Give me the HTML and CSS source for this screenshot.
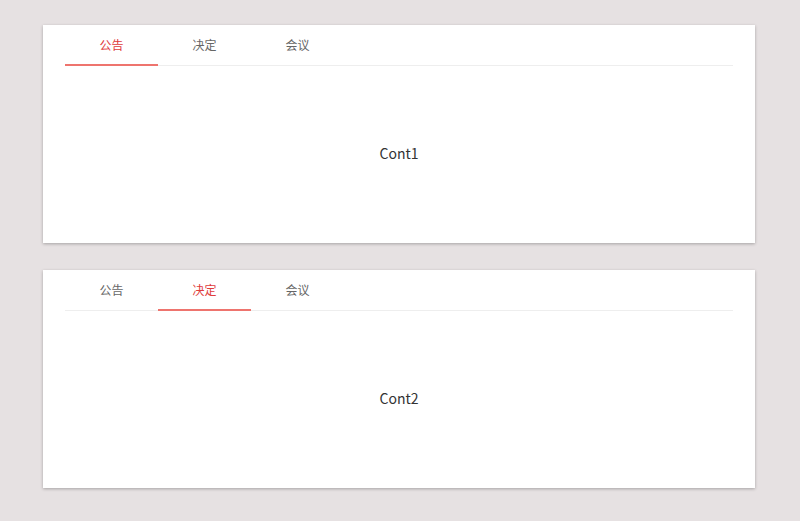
FILE: index.html
```html
<!DOCTYPE html>
<html lang="zh">
<head>
<meta charset="utf-8">
<title>Tabs</title>
<link rel="stylesheet" href="styles.css">
</head>
<body>
<div class="page">
  <section class="card">
    <nav class="tabs">
      <span class="tab active">公告</span>
      <span class="tab">决定</span>
      <span class="tab">会议</span>
    </nav>
    <div class="content">Cont1</div>
  </section>
  <section class="card">
    <nav class="tabs">
      <span class="tab">公告</span>
      <span class="tab active">决定</span>
      <span class="tab">会议</span>
    </nav>
    <div class="content">Cont2</div>
  </section>
</div>
</body>
</html>
```
FILE: styles.css
```css
html, body {
  margin: 0;
  padding: 0;
  background: #e6e1e2;
  font-family: "Noto Sans CJK SC", "Noto Sans", sans-serif;
}
.page {
  width: 712px;
  margin: 0 auto;
  padding: 25px 0 32px;
  display: flex;
  flex-direction: column;
  gap: 27px;
  position: relative;
  left: -1px;
}
.card {
  background: #fff;
  height: 218px;
  padding: 0 22px;
  display: flex;
  flex-direction: column;
  box-shadow: 0 1px 3px rgba(0,0,0,0.28);
}
.tabs {
  display: flex;
  height: 40px;
  border-bottom: 1px solid #eeeeee;
}
.tab {
  position: relative;
  width: 93px;
  height: 40px;
  line-height: 40px;
  text-align: center;
  font-size: 12px;
  color: #666;
}
.tab.active {
  color: #e03c3c;
}
.tab.active::after {
  content: "";
  position: absolute;
  left: 0;
  right: 0;
  bottom: -1px;
  height: 2px;
  background: #ee746e;
}
.content {
  flex: 1;
  display: flex;
  align-items: center;
  justify-content: center;
  font-size: 14px;
  color: #333;
  padding-bottom: 3px;
}
```
